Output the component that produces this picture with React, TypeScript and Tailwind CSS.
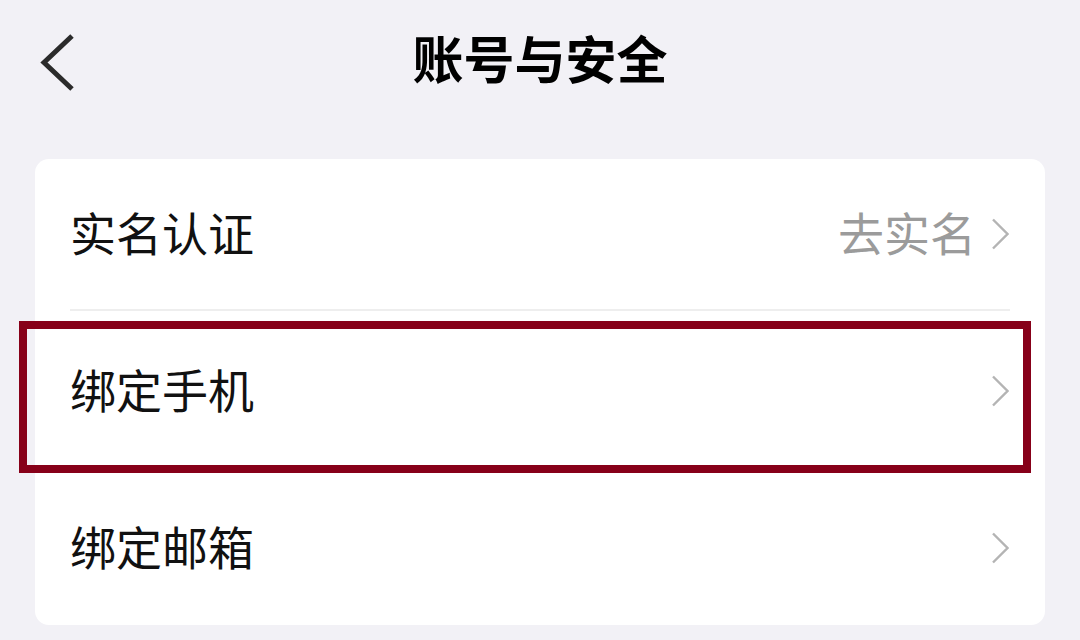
import React from "react";

const font = { fontFamily: '"Noto Sans CJK SC", "Noto Sans", sans-serif' };

function Chevron() {
  return (
    <svg width="18" height="32" viewBox="0 0 18 32" className="shrink-0">
      <polyline points="2,1.5 16.5,16 2,30.5" fill="none" stroke="#b4b4b4" strokeWidth="2.4" />
    </svg>
  );
}

function Row({ label, value, h }: { label: string; value?: string; h: string }) {
  return (
    <div className={`flex items-center justify-between pl-[35px] pr-[36px] ${h}`}>
      <span className="text-[46px] leading-none text-[#111111] pb-[6px]">{label}</span>
      <div className="flex items-center gap-[15px]">
        {value && <span className="text-[46px] leading-none text-[#9b9b9b] pb-[6px]">{value}</span>}
        <Chevron />
      </div>
    </div>
  );
}

export default function App() {
  return (
    <div className="relative w-[1080px] h-[640px] overflow-hidden bg-[#f2f1f6]" style={font}>
      <div className="relative h-[122px] flex items-center justify-center">
        <svg width="40" height="60" viewBox="0 0 40 60" className="absolute left-[38px] top-[32px]">
          <polyline points="34,4 6,30.5 34,57" fill="none" stroke="#2b2b2b" strokeWidth="5" />
        </svg>
        <h1 className="text-[51px] font-bold leading-none text-black pb-[8px]">账号与安全</h1>
      </div>
      <div className="mt-[37px] mx-[35px] bg-white rounded-[14px] flex flex-col overflow-hidden">
        <Row label="实名认证" value="去实名" h="h-[150px]" />
        <div className="mx-[35px] h-[2px] bg-[#eeeeee]" />
        <Row label="绑定手机" h="h-[159px]" />
        <Row label="绑定邮箱" h="h-[155px]" />
      </div>
      <div className="absolute left-[19px] top-[321px] w-[1012px] h-[152px] border-[8px] border-[#870019]" />
    </div>
  );
}
